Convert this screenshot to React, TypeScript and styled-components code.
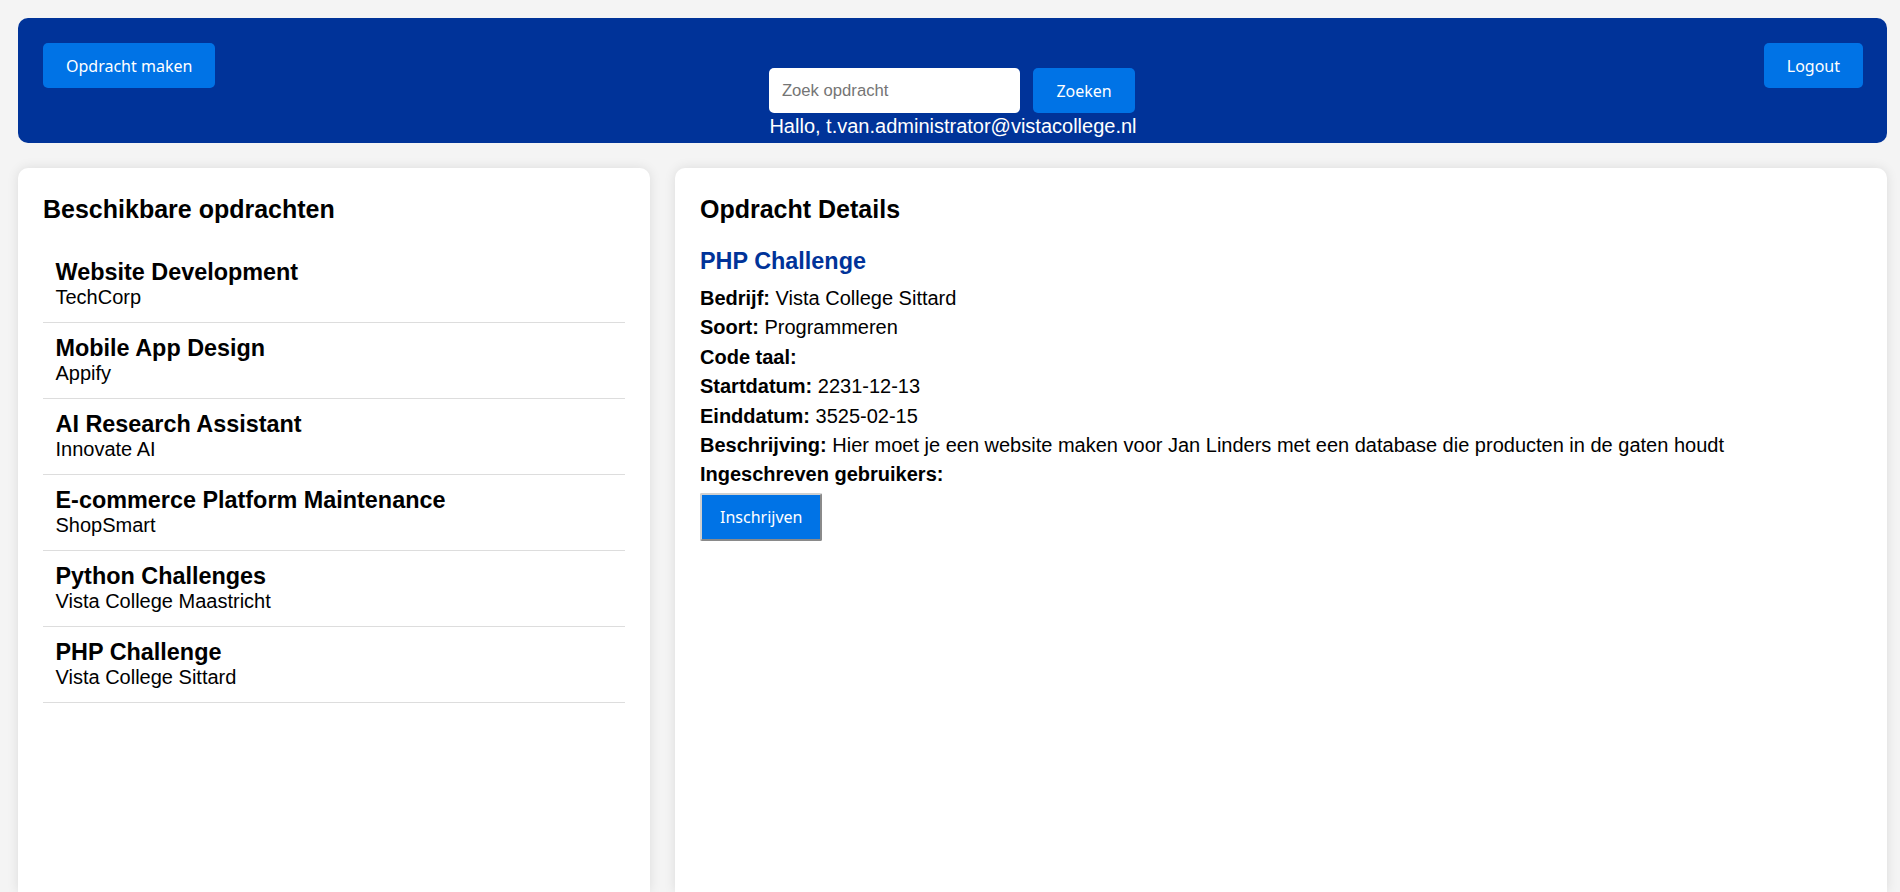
import React from "react";
import styled, { createGlobalStyle } from "styled-components";

const GlobalStyle = createGlobalStyle`
  html, body {
    margin: 0;
    padding: 0;
    overflow: hidden;
  }
  body {
    background-color: #f4f4f4;
    font-family: "Liberation Sans", Arial, sans-serif;
    font-size: 20px;
    color: #000;
  }
`;

const Page = styled.div`
  display: flex;
  flex-direction: column;
  gap: 25px;
  padding: 18px 13px 0 18px;
`;

const Header = styled.header`
  display: grid;
  grid-template-columns: 1fr auto 1fr;
  align-items: start;
  padding: 25px 24px 5px 25px;
  background-color: #003399;
  border-radius: 10px;
`;

const ActionButton = styled.button<{ $side?: "start" | "end" }>`
  justify-self: ${(p) => p.$side || "auto"};
  height: 45px;
  padding: 0 23px;
  border: none;
  border-radius: 5px;
  background-color: #0073e6;
  color: #fff;
  font-family: "Noto Sans", "DejaVu Sans", sans-serif;
  font-size: 16px;
  cursor: pointer;
`;

const SearchArea = styled.div`
  display: flex;
  flex-direction: column;
  gap: 2px;
  margin-top: 25px;
`;

const SearchForm = styled.form`
  display: flex;
  gap: 13px;
`;

const SearchInput = styled.input`
  box-sizing: border-box;
  width: 251px;
  height: 45px;
  padding: 0 12.5px;
  border: none;
  border-radius: 5px;
  font-family: "Liberation Sans", Arial, sans-serif;
  font-size: 16.67px;
  &::placeholder {
    color: #757575;
  }
`;

const Greeting = styled.span`
  color: #fff;
  font-size: 20px;
`;

const Main = styled.main`
  display: grid;
  grid-template-columns: 632px 1fr;
  gap: 25px;
`;

const Panel = styled.section`
  height: 672px;
  padding: 27px 25px 25px;
  background-color: #fff;
  border-radius: 10px 10px 0 0;
  box-shadow: 0 0 12px rgba(0, 0, 0, 0.1);
`;

const PanelTitle = styled.h2<{ $gap?: number }>`
  margin: 0 0 ${(p) => p.$gap ?? 22.5}px;
  font-size: 25px;
  font-weight: bold;
`;

const List = styled.ul`
  list-style: none;
  margin: 0;
  padding: 0;
`;

const Item = styled.li`
  padding: 12.5px;
  border-bottom: 1px solid #ddd;
  cursor: pointer;
`;

const ItemTitle = styled.h3`
  margin: 0;
  font-size: 23.4px;
  font-weight: bold;
`;

const ItemCompany = styled.div`
  font-size: 20px;
`;

const DetailTitle = styled.h3`
  margin: 0 0 12.5px;
  font-size: 23.4px;
  font-weight: bold;
  color: #003399;
`;

const DetailRow = styled.p`
  margin: 0 0 6.4px;
  font-size: 20px;
`;

const EnrollButton = styled.button`
  height: 48px;
  padding: 0 18px;
  border: 2px solid;
  border-color: #d0d0d0 #8a8a8a #8a8a8a #d0d0d0;
  border-radius: 2px;
  background-color: #0073e6;
  color: #fff;
  font-family: "Noto Sans", "DejaVu Sans", sans-serif;
  font-size: 16px;
  cursor: pointer;
`;

const assignments = [
  { title: "Website Development", company: "TechCorp" },
  { title: "Mobile App Design", company: "Appify" },
  { title: "AI Research Assistant", company: "Innovate AI" },
  { title: "E-commerce Platform Maintenance", company: "ShopSmart" },
  { title: "Python Challenges", company: "Vista College Maastricht" },
  { title: "PHP Challenge", company: "Vista College Sittard" },
];

const details: [string, string][] = [
  ["Bedrijf:", "Vista College Sittard"],
  ["Soort:", "Programmeren"],
  ["Code taal:", ""],
  ["Startdatum:", "2231-12-13"],
  ["Einddatum:", "3525-02-15"],
  [
    "Beschrijving:",
    "Hier moet je een website maken voor Jan Linders met een database die producten in de gaten houdt",
  ],
  ["Ingeschreven gebruikers:", ""],
];

export default function App() {
  return (
    <>
      <GlobalStyle />
      <Page>
        <Header>
          <ActionButton $side="start">Opdracht maken</ActionButton>
          <SearchArea>
            <SearchForm onSubmit={(e) => e.preventDefault()}>
              <SearchInput type="text" placeholder="Zoek opdracht" />
              <ActionButton type="submit">Zoeken</ActionButton>
            </SearchForm>
            <Greeting>Hallo, t.van.administrator@vistacollege.nl</Greeting>
          </SearchArea>
          <ActionButton $side="end">Logout</ActionButton>
        </Header>
        <Main>
          <Panel>
            <PanelTitle>Beschikbare opdrachten</PanelTitle>
            <List>
              {assignments.map((a) => (
                <Item key={a.title}>
                  <ItemTitle>{a.title}</ItemTitle>
                  <ItemCompany>{a.company}</ItemCompany>
                </Item>
              ))}
            </List>
          </Panel>
          <Panel>
            <PanelTitle $gap={23.5}>Opdracht Details</PanelTitle>
            <DetailTitle>PHP Challenge</DetailTitle>
            {details.map(([label, value]) => (
              <DetailRow key={label}>
                <strong>{label}</strong>
                {value ? " " + value : ""}
              </DetailRow>
            ))}
            <EnrollButton>Inschrijven</EnrollButton>
          </Panel>
        </Main>
      </Page>
    </>
  );
}
